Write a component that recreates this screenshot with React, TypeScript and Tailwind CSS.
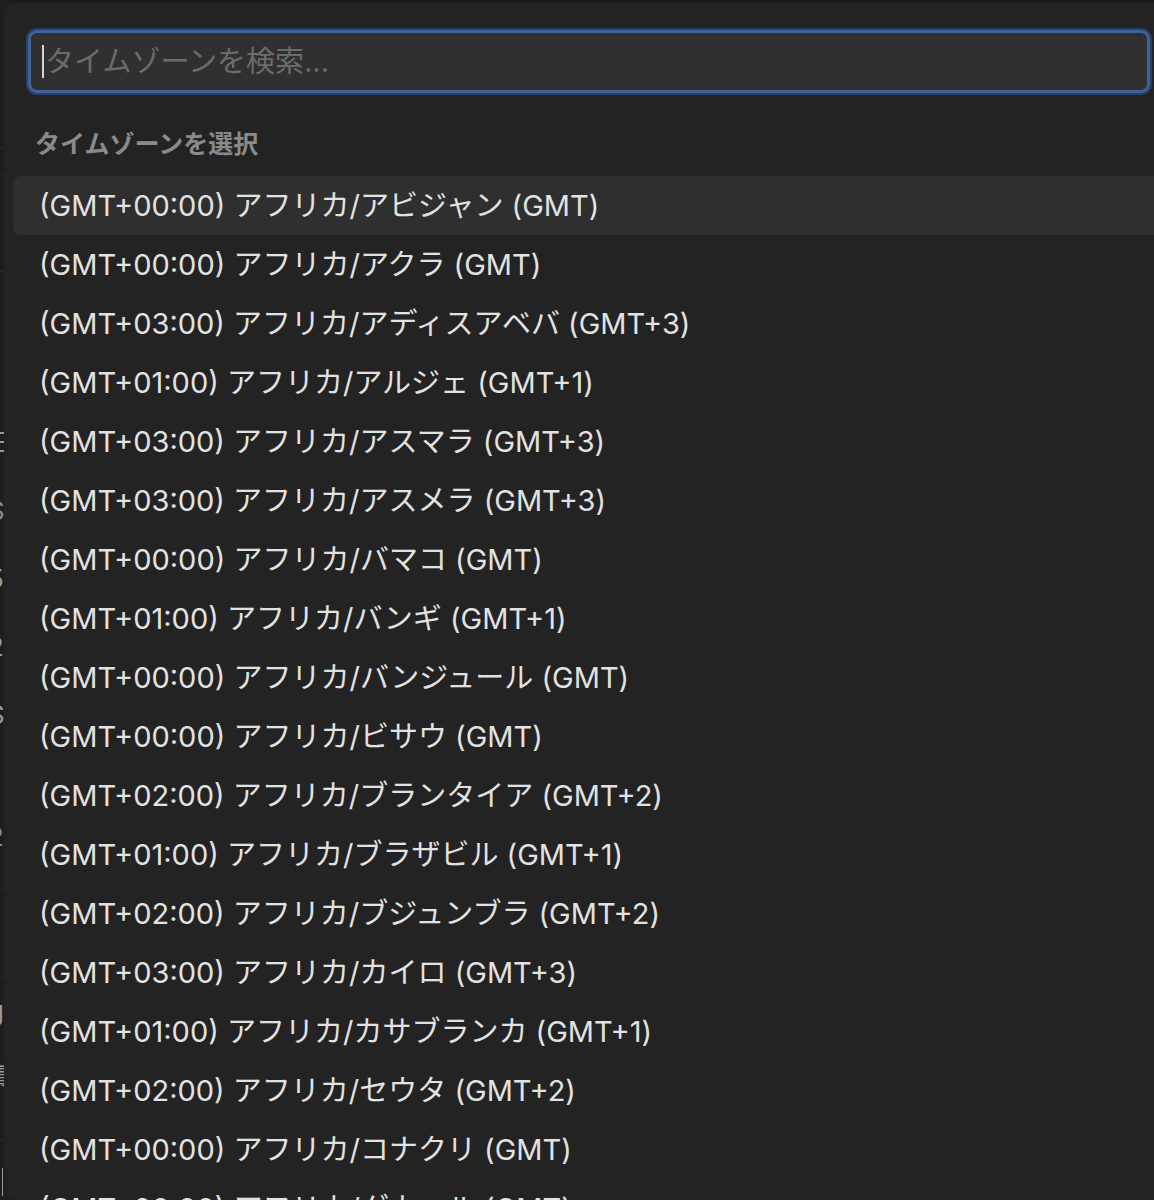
import React from "react";

const rows = [
  "(GMT+00:00) アフリカ/アビジャン (GMT)",
  "(GMT+00:00) アフリカ/アクラ (GMT)",
  "(GMT+03:00) アフリカ/アディスアベバ (GMT+3)",
  "(GMT+01:00) アフリカ/アルジェ (GMT+1)",
  "(GMT+03:00) アフリカ/アスマラ (GMT+3)",
  "(GMT+03:00) アフリカ/アスメラ (GMT+3)",
  "(GMT+00:00) アフリカ/バマコ (GMT)",
  "(GMT+01:00) アフリカ/バンギ (GMT+1)",
  "(GMT+00:00) アフリカ/バンジュール (GMT)",
  "(GMT+00:00) アフリカ/ビサウ (GMT)",
  "(GMT+02:00) アフリカ/ブランタイア (GMT+2)",
  "(GMT+01:00) アフリカ/ブラザビル (GMT+1)",
  "(GMT+02:00) アフリカ/ブジュンブラ (GMT+2)",
  "(GMT+03:00) アフリカ/カイロ (GMT+3)",
  "(GMT+01:00) アフリカ/カサブランカ (GMT+1)",
  "(GMT+02:00) アフリカ/セウタ (GMT+2)",
  "(GMT+00:00) アフリカ/コナクリ (GMT)",
  "(GMT+00:00) アフリカ/ダカール (GMT)",
];

const font = { fontFamily: '"Inter", "Noto Sans CJK JP", sans-serif' };

export default function App() {
  return (
    <div
      className="w-[1154px] h-[1200px] overflow-hidden bg-[#1c1c1c] flex"
      style={font}
    >
      {/* background app sliver */}
      <div className="w-[4px] shrink-0 overflow-hidden bg-[#1e1e1e] flex flex-col text-[#9a9a9a] text-[26px] leading-none">
        <div className="h-[148px] border-b border-[#2a2a2a]" />
        <div className="h-[27px] border-b border-[#2a2a2a]" />
        <div className="h-[97px] border-b border-[#2a2a2a]" />
        <div className="h-[110px]" />
        <div className="-ml-[10px]">(</div>
        <div className="h-[22px]" />
        <div className="-ml-[14px]">三</div>
        <div className="h-[42px]" />
        <div className="-ml-[12px] text-[#7f8f8f]">S</div>
        <div className="h-[42px]" />
        <div className="-ml-[12px]">5</div>
        <div className="h-[42px]" />
        <div className="-ml-[12px]">2</div>
        <div className="h-[42px]" />
        <div className="-ml-[12px]">S</div>
        <div className="h-[30px]" />
        <div className="-ml-[12px]">(</div>
        <div className="h-[40px]" />
        <div className="-ml-[12px] text-[#7f8f8f]">2</div>
        <div className="h-[40px] border-b border-[#2a2a2a]" />
        <div className="h-[88px] border-b border-[#2a2a2a]" />
        <div className="h-[20px]" />
        <div className="-ml-[12px]">g</div>
        <div className="h-[40px]" />
        <div className="-ml-[14px]">責</div>
        <div className="h-[50px] border-b border-[#2a2a2a]" />
        <div className="h-[28px]" />
        <div className="ml-[2px] w-[1px] h-[28px] bg-[#9a9a9a]" />
      </div>

      {/* popover */}
      <div className="mt-[3px] w-[1170px] shrink-0 rounded-[10px] bg-[#232323] pt-[27px]">
        <div className="px-[24px]">
          <div className="h-[63px] rounded-[9px] border-[3px] border-[#3d6399] ring-2 ring-[#29406a] bg-[#303030] flex items-center pl-[11px]">
            <span className="w-[2px] h-[33px] bg-[#d4d4d4] mr-[1px]" />
            <span className="text-[29px] text-[#6c6c6c] leading-none">
              タイムゾーンを検索...
            </span>
          </div>
        </div>

        <div className="pl-[31px] mt-[39px] text-[25px] leading-[24px] font-semibold text-[#8a8a8a]">
          タイムゾーンを選択
        </div>

        <div className="mt-[20px] px-[9px] flex flex-col">
          {rows.map((r, i) => (
            <div
              key={i}
              className={
                i === 0
                  ? "h-[59px] shrink-0 rounded-[8px] bg-[#2f2f2f] pl-[26px] flex items-center text-[29px] text-[#e2e2e2] whitespace-nowrap"
                  : "h-[59px] shrink-0 rounded-[8px] pl-[26px] flex items-center text-[29px] text-[#e2e2e2] whitespace-nowrap"
              }
            >
              {r}
            </div>
          ))}
        </div>
      </div>
    </div>
  );
}
